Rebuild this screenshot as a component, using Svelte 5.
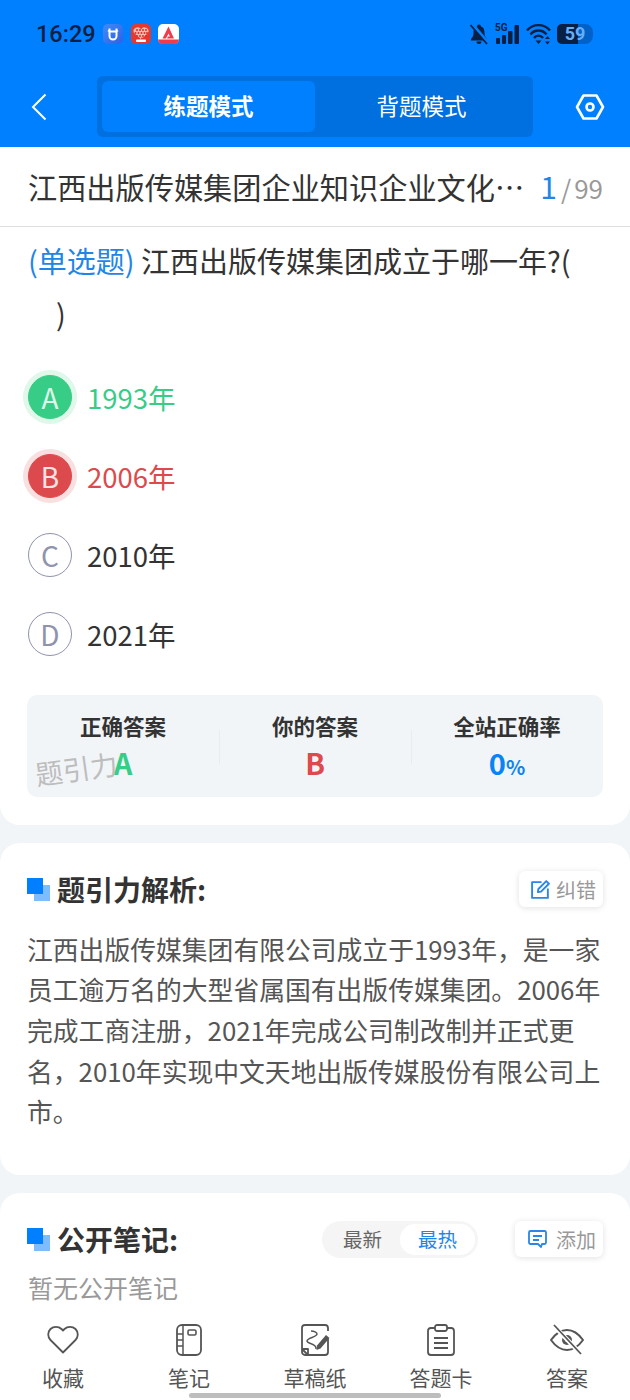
<script>
  const options = [
    { key: 'A', text: '1993年', state: 'right' },
    { key: 'B', text: '2006年', state: 'wrong' },
    { key: 'C', text: '2010年', state: '' },
    { key: 'D', text: '2021年', state: '' }
  ];

  // dots of the little heart app icon
  const dots = [
    [6, 6], [9, 6], [12, 6], [15, 6], [4.500, 9], [7.500, 9], [10.500, 9], [13.500, 9], [16, 9],
    [6, 12], [9, 12], [12, 12], [15, 12], [8, 14.500], [11, 14.500]
  ];
</script>

<div class="page">
  <header class="top">
    <div class="status">
      <span class="time">16:29</span>
      <div class="apps">
        <svg width="20" height="20" viewBox="0 0 20 20">
          <defs>
            <linearGradient id="appblue" x1="0" y1="0" x2="1" y2="1">
              <stop offset="0" stop-color="#3f8cf5" />
              <stop offset="1" stop-color="#2f5fe8" />
            </linearGradient>
          </defs>
          <rect width="20" height="20" rx="5" fill="url(#appblue)" />
          <path d="M6.500 7.500v4.500a3.500 3.500 0 0 0 7 0V7.500M5 6.500c1.500 1.200 8.500 1.200 10 0M6.500 4.500v2M13.500 4.500v2" fill="none" stroke="#fff" stroke-width="2" />
        </svg>
        <svg width="20" height="20" viewBox="0 0 20 20">
          <rect width="20" height="20" rx="5" fill="#e5392f" />
          <path d="M10 15.500 3 9a3.800 3.800 0 0 1 7-3.500A3.800 3.800 0 0 1 17 9z" fill="#f6b9ad" />
          {#each dots as d}
            <circle cx={d[0]} cy={d[1]} r="1" fill="#d9302a" />
          {/each}
          <rect x="5" y="15.500" width="10" height="2.500" rx="1" fill="#fff" />
        </svg>
        <svg width="21" height="20" viewBox="0 0 21 20">
          <rect width="21" height="20" rx="5" fill="#fff" />
          <path d="M10.500 2.500 4.500 14.500h3.500l2.500-5 1.500 3H10l-1 2h7z" fill="#ef3b4c" />
          <path d="M0 15.500h21V15 15.500A4.500 4.500 0 0 1 16 20H5a4.500 4.500 0 0 1-5-4.500z" fill="#ef3b4c" />
        </svg>
      </div>
      <div class="sys">
        <svg width="20" height="22" viewBox="0 0 20 22">
          <path d="M10 1.500a2 2 0 0 0-2 2C5 4.500 4.500 7 4.500 10c0 3-1 4.500-2.500 6v1.500h16V16c-1.500-1.500-2.500-3-2.500-6 0-3-.5-5.500-3.500-6.500a2 2 0 0 0-2-2zM7.500 18.500a2.500 2.500 0 0 0 5 0z" fill="#0a1f44" />
          <path d="M3 1l16 19" stroke="#0080ff" stroke-width="3.500" />
          <path d="M1.500 2l16.500 19" stroke="#0a1f44" stroke-width="1.800" />
        </svg>
        <svg class="signal" width="25" height="22" viewBox="0 0 25 22">
          <text x="0" y="8" class="g5">5G</text>
          <rect x="1" y="15" width="4" height="6" rx="1" fill="#0a1f44" />
          <rect x="7" y="12" width="4" height="9" rx="1" fill="#0a1f44" />
          <rect x="13" y="8" width="4.500" height="13" rx="1" fill="#0a1f44" />
          <rect x="19.500" y="2" width="4.500" height="19" rx="1" fill="#0a1f44" />
        </svg>
        <svg width="25" height="22" viewBox="0 0 25 22">
          <path d="M1 7.500a15 15 0 0 1 23 0M4.500 11.500a10 10 0 0 1 16 0M8 15a5.500 5.500 0 0 1 9 0" fill="none" stroke="#0a1f44" stroke-width="2.400" />
          <path d="M12.500 21 9.500 17.500h6zM21.500 13l-2.500 3h5zM21.500 21.500l-2.500-3h5z" fill="#0a1f44" />
        </svg>
        <div class="battery"><div class="level"></div><span>59</span></div>
      </div>
    </div>
    <nav class="nav">
      <svg class="back" width="16" height="28" viewBox="0 0 16 28">
        <path d="M14.500 1.500 2 14l12.500 12.500" fill="none" stroke="#fff" stroke-width="2" />
      </svg>
      <div class="modes">
        <span class="mode active">练题模式</span>
        <span class="mode">背题模式</span>
      </div>
      <svg class="gear" width="30" height="26" viewBox="0 0 30 26">
        <path d="M8.500 1.500h13L28 13l-6.500 11.500h-13L2 13z" fill="none" stroke="#fff" stroke-width="2.600" stroke-linejoin="round" />
        <circle cx="15" cy="13" r="3.500" fill="none" stroke="#fff" stroke-width="2.600" />
      </svg>
    </nav>
  </header>

  <main class="scroll">
    <section class="card question">
      <div class="title-row">
        <h1>江西出版传媒集团企业知识企业文化…</h1>
        <div class="count"><b>1</b><i>/</i>99</div>
      </div>
      <div class="body">
        <p class="stem"><span class="kind">(单选题)</span> 江西出版传媒集团成立于哪一年?(<br /><span class="paren">)</span></p>
        <ul class="options">
          {#each options as o}
            <li class={o.state}>
              <span class="letter">{o.key}</span>
              <span>{o.text}</span>
            </li>
          {/each}
        </ul>
        <div class="stats">
          <div class="stat"><strong>正确答案</strong><em class="green">A</em></div>
          <div class="stat"><strong>你的答案</strong><em class="red">B</em></div>
          <div class="stat"><strong>全站正确率</strong><em class="blue">0<small>%</small></em></div>
          <span class="mark">题引力</span>
        </div>
      </div>
    </section>

    <section class="card analysis">
      <div class="head">
        <span class="squares"></span>
        <h2>题引力解析:</h2>
        <button class="chip">
          <svg width="21" height="21" viewBox="0 0 20 20">
            <path d="M11 3H2v15h15V9M8 9.500 7.500 12.500 10.500 12 18 4.500 15.500 2z" fill="none" stroke="#2a86e8" stroke-width="1.800" stroke-linejoin="round" />
          </svg>
          纠错
        </button>
      </div>
      <p class="text">江西出版传媒集团有限公司成立于1993年，是一家员工逾万名的大型省属国有出版传媒集团。2006年完成工商注册，2021年完成公司制改制并正式更名，2010年实现中文天地出版传媒股份有限公司上市。</p>
    </section>

    <section class="card notes">
      <div class="head">
        <span class="squares"></span>
        <h2>公开笔记:</h2>
        <div class="sort">
          <span>最新</span>
          <span class="on">最热</span>
        </div>
        <button class="chip">
          <svg width="21" height="20" viewBox="0 0 21 20">
            <path d="M3.500 2h14A1.500 1.500 0 0 1 19 3.500v10a1.500 1.500 0 0 1-1.500 1.500H15l-1 3-3-3H3.500A1.500 1.500 0 0 1 2 13.500v-10A1.500 1.500 0 0 1 3.500 2zM6 7h9M6 11h6" fill="none" stroke="#2a86e8" stroke-width="1.800" stroke-linejoin="round" />
          </svg>
          添加
        </button>
      </div>
      <p class="empty">暂无公开笔记</p>
    </section>
  </main>

  <footer class="tabs">
    <div class="tab">
      <svg width="32" height="28" viewBox="0 0 32 28">
        <path d="M16 26.500 3.500 14a7.800 7.800 0 0 1 0-11 8 8 0 0 1 11 0L16 4.500 17.500 3a8 8 0 0 1 11 0 7.800 7.800 0 0 1 0 11z" fill="none" stroke="#555" stroke-width="1.800" stroke-linejoin="round" />
      </svg>
      <span>收藏</span>
    </div>
    <div class="tab">
      <svg width="26" height="32" viewBox="0 0 26 32">
        <rect x="1" y="1" width="24" height="30" rx="5" fill="none" stroke="#555" stroke-width="1.800" />
        <path d="M7 1v30M1 10h6M1 16h6M1 22h6" fill="none" stroke="#555" stroke-width="1.500" />
        <rect x="12" y="6" width="8" height="5" rx="1.500" fill="none" stroke="#555" stroke-width="1.600" />
      </svg>
      <span>笔记</span>
    </div>
    <div class="tab">
      <svg width="30" height="32" viewBox="0 0 30 32">
        <path d="M8 31H5a3 3 0 0 1-3-3V4a3 3 0 0 1 3-3h20a3 3 0 0 1 3 3v3M28 15v13a3 3 0 0 1-3 3H8l-6-6h6v6" fill="none" stroke="#555" stroke-width="1.800" stroke-linejoin="round" />
        <path d="M11 7c3 0 6 1.500 6 3 0 3-10 4-10 7 0 3 10 2 9 8" fill="none" stroke="#555" stroke-width="1.500" />
        <path d="M17 21.500 26 11l3.500 3-9 10.500-4 1.500z" fill="#555" />
      </svg>
      <span>草稿纸</span>
    </div>
    <div class="tab">
      <svg width="28" height="32" viewBox="0 0 28 32">
        <path d="M8 4H4a3 3 0 0 0-3 3v21a3 3 0 0 0 3 3h20a3 3 0 0 0 3-3V7a3 3 0 0 0-3-3h-4" fill="none" stroke="#555" stroke-width="1.800" />
        <rect x="8" y="1" width="12" height="6" rx="2" fill="none" stroke="#555" stroke-width="1.800" />
        <path d="M7 14h14M7 19h14M7 24h14" stroke="#555" stroke-width="1.800" />
      </svg>
      <span>答题卡</span>
    </div>
    <div class="tab">
      <svg width="36" height="32" viewBox="0 0 36 32">
        <path d="M2 16C7 9 12 6 18 6s11 3 16 10c-5 7-10 10-16 10S7 23 2 16z" fill="none" stroke="#555" stroke-width="2" stroke-linejoin="round" />
        <circle cx="18" cy="16" r="5" fill="#555" />
        <circle cx="18" cy="16" r="2" fill="#fff" />
        <path d="M4.500 1.500 33 31" stroke="#fff" stroke-width="4.500" />
        <path d="M5 1l27 29" stroke="#555" stroke-width="1.800" />
      </svg>
      <span>答案</span>
    </div>
    <div class="home"></div>
  </footer>
</div>

<style>
  :global(body) {
    margin: 0;
    background: #f2f5f8;
  }

  .page {
    width: 630px;
    height: 1400px;
    display: flex;
    flex-direction: column;
    overflow: hidden;
    background: #f2f5f8;
    color: #333;
    font-family: "Noto Sans CJK SC", "Noto Sans", sans-serif;
  }

  .top {
    height: 147px;
    flex: none;
    background: #0080ff;
    box-sizing: border-box;
  }

  .status {
    height: 76px;
    padding: 0 37px 8px 36px;
    box-sizing: border-box;
    display: flex;
    align-items: center;
  }

  .time {
    font-family: Roboto, sans-serif;
    font-size: 23.500px;
    font-weight: 500;
    color: #0a1f44;
    width: 67px;
  }

  .apps {
    display: flex;
    gap: 7.500px;
  }

  .sys {
    margin-left: auto;
    display: flex;
    align-items: center;
    gap: 6px;
  }

  .g5 {
    font: 700 10px Roboto, sans-serif;
    fill: #0a1f44;
  }

  .battery {
    position: relative;
    width: 36px;
    height: 20px;
    border-radius: 5px 8px 8px 5px;
    background: #0062c8;
    color: #66aef5;
    font: 700 18px/20px Roboto, sans-serif;
    text-align: center;
  }

  .level {
    position: absolute;
    left: 0;
    top: 0;
    bottom: 0;
    width: 57%;
    border-radius: 5px 0 0 5px;
    background: #0a1f44;
  }

  .battery span {
    position: relative;
  }

  .nav {
    display: flex;
    align-items: center;
    height: 61px;
    padding: 0 25px 0 31px;
  }

  .modes {
    margin-left: 50px;
    width: 436px;
    height: 61px;
    padding: 5px;
    box-sizing: border-box;
    border-radius: 6px;
    background: #006fdf;
    display: flex;
  }

  .mode {
    flex: 1;
    text-align: center;
    line-height: 49px;
    font-size: 22.500px;
    color: #fff;
    border-radius: 6px;
  }

  .active {
    background: #0080ff;
    font-weight: 700;
  }

  .gear {
    margin-left: auto;
  }

  .scroll {
    flex: 1;
    min-height: 0;
    display: flex;
    flex-direction: column;
    gap: 18px;
  }

  .card {
    background: #fff;
    border-radius: 20px;
    flex: none;
  }

  .question {
    border-radius: 0 0 20px 20px;
    height: 678px;
  }

  .title-row {
    height: 80px;
    padding: 0 27px 2px 28px;
    box-sizing: border-box;
    border-bottom: 1px solid #dedede;
    display: flex;
    align-items: center;
    justify-content: space-between;
  }

  h1 {
    margin: 0;
    font-size: 29.200px;
    font-weight: 400;
    color: #333;
    white-space: nowrap;
  }

  .count {
    font-size: 26px;
    color: #999;
  }

  .count b {
    color: #1f86e8;
    font-weight: 400;
    font-size: 30px;
  }

  .count i {
    font-style: normal;
    margin: 0 3px 0 4px;
  }

  .body {
    padding: 0 27px;
  }

  .stem {
    margin: 0 0 0 1px;
    padding-top: 7px;
    font-size: 29px;
    line-height: 53px;
    color: #333;
    white-space: nowrap;
  }

  .kind {
    color: #1f86e8;
  }

  .paren {
    margin-left: 28px;
  }

  .options {
    list-style: none;
    margin: 35px 0 0 1px;
    padding: 0;
    display: flex;
    flex-direction: column;
    gap: 35px;
  }

  li {
    display: flex;
    align-items: center;
    gap: 15px;
    height: 44px;
    font-size: 27.500px;
    color: #333;
  }

  .letter {
    width: 44px;
    height: 44px;
    box-sizing: border-box;
    border: 1px solid #8f93ad;
    border-radius: 50%;
    color: #8f93ad;
    text-align: center;
    line-height: 42px;
    font-size: 28px;
    flex: none;
  }

  .right {
    color: #37cd86;
  }

  .right .letter {
    background: #37cd86;
    border-color: #37cd86;
    color: #dff7ea;
    box-shadow: 0 0 0 5px #e0f7ea;
  }

  .wrong {
    color: #dd4a4d;
  }

  .wrong .letter {
    background: #dd4a4d;
    border-color: #dd4a4d;
    color: #fbe3e3;
    box-shadow: 0 0 0 5px #f9e0e0;
  }

  .stats {
    position: relative;
    margin-top: 39px;
    height: 102px;
    border-radius: 10px;
    background: #f2f5f8;
    display: grid;
    grid-template-columns: repeat(3, 1fr);
    align-items: center;
  }

  .stat {
    position: relative;
    display: flex;
    flex-direction: column;
    align-items: center;
    gap: 4px;
  }

  .stat + .stat::before {
    content: "";
    position: absolute;
    left: 0;
    top: 18px;
    height: 34px;
    width: 1px;
    background: #e9ecef;
  }

  .stat strong {
    font-size: 21.500px;
    line-height: 28px;
    color: #333;
  }

  .stat em {
    font-style: normal;
    font-weight: 700;
    font-size: 29px;
    line-height: 36px;
    height: 36px;
  }

  .stat small {
    font-size: 20px;
    line-height: 1;
  }

  .green {
    color: #37cd86;
  }

  .red {
    color: #dd4a4d;
  }

  .blue {
    color: #0a84f5;
  }

  .mark {
    position: absolute;
    left: 8px;
    top: 53px;
    font-size: 27.500px;
    color: #bdbdbd;
    transform: rotate(-8deg);
  }

  .analysis {
    height: 332px;
    padding: 26px 27px 0;
    box-sizing: border-box;
  }

  .head {
    display: flex;
    align-items: center;
    height: 40px;
  }

  .squares {
    position: relative;
    width: 23px;
    height: 23px;
    margin-right: 7px;
    background: linear-gradient(#7dbdff, #7dbdff) 7px 7px / 16px 16px no-repeat;
    flex: none;
  }

  .squares::before {
    content: "";
    position: absolute;
    left: 0;
    top: 0;
    width: 16px;
    height: 16px;
    background: #0080ff;
  }

  h2 {
    margin: 0;
    font-size: 28px;
    font-weight: 700;
    color: #333;
  }

  .chip {
    margin-left: auto;
    height: 36px;
    padding: 0 7px 0 11px;
    border: none;
    border-radius: 6px;
    background: #fff;
    box-shadow: 0 1px 6px rgba(0, 0, 0, 0.12);
    display: flex;
    align-items: center;
    gap: 5px;
    font: inherit;
    font-size: 20px;
    color: #999;
  }

  .text {
    margin: 19.500px 0 0;
    font-size: 25.800px;
    line-height: 40.700px;
    color: #555;
    word-break: break-all;
  }

  .notes {
    height: 300px;
    padding: 26px 27px 0;
    box-sizing: border-box;
  }

  .sort {
    margin-left: auto;
    height: 37px;
    width: 156px;
    padding: 3px;
    box-sizing: border-box;
    border-radius: 19px;
    background: #f5f5f5;
    display: flex;
    justify-content: flex-end;
    font-size: 19.500px;
    color: #666;
  }

  .sort span {
    flex: 1;
    text-align: center;
    line-height: 30px;
    border-radius: 15px;
  }

  .sort .on {
    flex: none;
    width: 75px;
    background: #fff;
    color: #1f86e8;
  }

  .notes .chip {
    margin-left: 37px;
    padding-left: 12px;
    gap: 8px;
  }

  .empty {
    margin: 10px 0 0 1px;
    font-size: 25px;
    line-height: 36px;
    color: #999;
  }

  .tabs {
    position: relative;
    height: 95px;
    flex: none;
    background: #fff;
    display: flex;
    justify-content: space-between;
    padding: 0 26px;
    box-sizing: border-box;
  }

  .tab {
    width: 74px;
    height: 95px;
    display: flex;
    flex-direction: column;
    align-items: center;
    justify-content: flex-start;
    padding-top: 19px;
    box-sizing: border-box;
    font-size: 21px;
    color: #555;
  }

  .tab svg {
    height: 32px;
    flex: none;
  }

  .tab span {
    margin-top: 6px;
    white-space: nowrap;
    line-height: 30px;
  }

  .home {
    position: absolute;
    left: 189px;
    bottom: 2px;
    width: 252px;
    height: 5px;
    border-radius: 3px;
    background: #bdbdbd;
  }
</style>
